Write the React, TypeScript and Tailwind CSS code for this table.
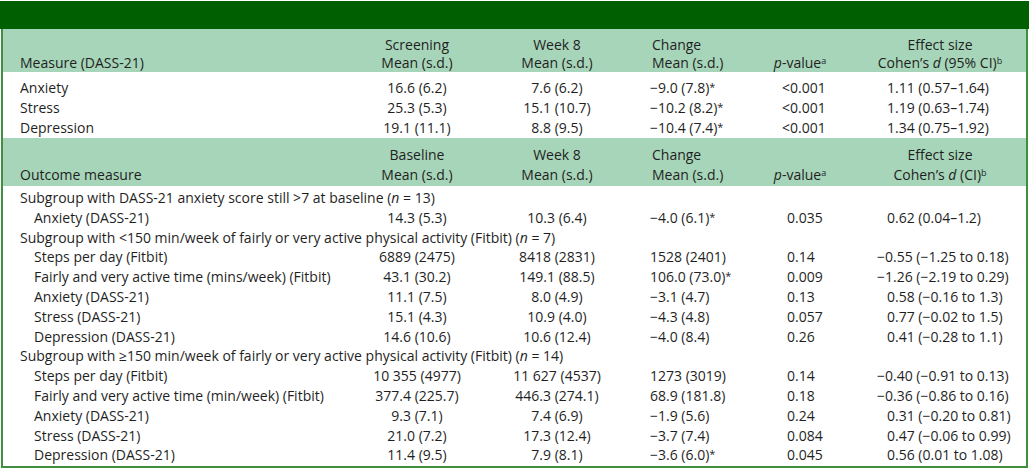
import React from "react";

const GRID = "grid grid-cols-[354px_120px_160px_96px_134px_146px_1fr]";

type Row = {
  label: string;
  v: [string, string, string, string, string];
};

const t1: Row[] = [
  { label: "Anxiety", v: ["16.6 (6.2)", "7.6 (6.2)", "\u22129.0 (7.8)*", "<0.001", "1.11 (0.57\u20131.64)"] },
  { label: "Stress", v: ["25.3 (5.3)", "15.1 (10.7)", "\u221210.2 (8.2)*", "<0.001", "1.19 (0.63\u20131.74)"] },
  { label: "Depression", v: ["19.1 (11.1)", "8.8 (9.5)", "\u221210.4 (7.4)*", "<0.001", "1.34 (0.75\u20131.92)"] },
];

type Item = { kind: "group"; text: React.ReactNode } | { kind: "row"; row: Row };

const n = (k: string) => (
  <>
    (<span className="italic">n</span> = {k})
  </>
);

const t2: Item[] = [
  { kind: "group", text: <>Subgroup with DASS-21 anxiety score still &gt;7 at baseline {n("13")}</> },
  { kind: "row", row: { label: "Anxiety (DASS-21)", v: ["14.3 (5.3)", "10.3 (6.4)", "\u22124.0 (6.1)*", "0.035", "0.62 (0.04\u20131.2)"] } },
  { kind: "group", text: <>Subgroup with &lt;150 min/week of fairly or very active physical activity (Fitbit) {n("7")}</> },
  { kind: "row", row: { label: "Steps per day (Fitbit)", v: ["6889 (2475)", "8418 (2831)", "1528 (2401)", "0.14", "\u22120.55 (\u22121.25 to 0.18)"] } },
  { kind: "row", row: { label: "Fairly and very active time (mins/week) (Fitbit)", v: ["43.1 (30.2)", "149.1 (88.5)", "106.0 (73.0)*", "0.009", "\u22121.26 (\u22122.19 to 0.29)"] } },
  { kind: "row", row: { label: "Anxiety (DASS-21)", v: ["11.1 (7.5)", "8.0 (4.9)", "\u22123.1 (4.7)", "0.13", "0.58 (\u22120.16 to 1.3)"] } },
  { kind: "row", row: { label: "Stress (DASS-21)", v: ["15.1 (4.3)", "10.9 (4.0)", "\u22124.3 (4.8)", "0.057", "0.77 (\u22120.02 to 1.5)"] } },
  { kind: "row", row: { label: "Depression (DASS-21)", v: ["14.6 (10.6)", "10.6 (12.4)", "\u22124.0 (8.4)", "0.26", "0.41 (\u22120.28 to 1.1)"] } },
  { kind: "group", text: <>Subgroup with &ge;150 min/week of fairly or very active physical activity (Fitbit) {n("14")}</> },
  { kind: "row", row: { label: "Steps per day (Fitbit)", v: ["10 355 (4977)", "11 627 (4537)", "1273 (3019)", "0.14", "\u22120.40 (\u22120.91 to 0.13)"] } },
  { kind: "row", row: { label: "Fairly and very active time (min/week) (Fitbit)", v: ["377.4 (225.7)", "446.3 (274.1)", "68.9 (181.8)", "0.18", "\u22120.36 (\u22120.86 to 0.16)"] } },
  { kind: "row", row: { label: "Anxiety (DASS-21)", v: ["9.3 (7.1)", "7.4 (6.9)", "\u22121.9 (5.6)", "0.24", "0.31 (\u22120.20 to 0.81)"] } },
  { kind: "row", row: { label: "Stress (DASS-21)", v: ["21.0 (7.2)", "17.3 (12.4)", "\u22123.7 (7.4)", "0.084", "0.47 (\u22120.06 to 0.99)"] } },
  { kind: "row", row: { label: "Depression (DASS-21)", v: ["11.4 (9.5)", "7.9 (8.1)", "\u22123.6 (6.0)*", "0.045", "0.56 (0.01 to 1.08)"] } },
];

function Val({ s }: { s: string }) {
  if (s.endsWith("*")) {
    return (
      <>
        {s.slice(0, -1)}
        <span className="text-[11px] relative -top-[2px]">*</span>
      </>
    );
  }
  return <>{s}</>;
}

function DataRow({ row, indent, h }: { row: Row; indent?: boolean; h: string }) {
  const [a, b, c, p, e] = row.v;
  const neg = e.startsWith("\u2212");
  return (
    <div className={`${GRID} ${h}`}>
      <div className={indent ? "pl-[31px] whitespace-nowrap" : "pl-[17px] whitespace-nowrap"}>{row.label}</div>
      <div className="text-center whitespace-nowrap">{a}</div>
      <div className="text-center whitespace-nowrap">{b}</div>
      <div className="pl-[13px] whitespace-nowrap">
        <Val s={c} />
      </div>
      <div className={p.startsWith("<") ? "pl-[49px] whitespace-nowrap" : "pl-[54px] whitespace-nowrap"}>{p}</div>
      <div className={neg ? "pl-[10px] whitespace-nowrap" : "pl-[20px] whitespace-nowrap"}>{e}</div>
      <div />
    </div>
  );
}

function Header({ first, c1, c6, lh }: { first: string; c1: string; c6: React.ReactNode; lh: string }) {
  return (
    <div className={`${GRID} ${lh}`}>
      <div className="pl-[17px] flex items-end">{first}</div>
      <div className="flex flex-col items-center">
        <span>{c1}</span>
        <span>Mean (s.d.)</span>
      </div>
      <div className="flex flex-col items-center">
        <span>Week 8</span>
        <span>Mean (s.d.)</span>
      </div>
      <div className="flex flex-col pl-[15px]">
        <span>Change</span>
        <span>Mean (s.d.)</span>
      </div>
      <div className="flex items-end justify-center">
        <span>
          <span className="italic">p</span>-value<sup className="text-[9px]">a</sup>
        </span>
      </div>
      <div className="flex flex-col items-center whitespace-nowrap">
        <span>Effect size</span>
        <span>{c6}</span>
      </div>
      <div />
    </div>
  );
}

export default function App() {
  return (
    <div className="w-[1029px] h-[476px] bg-white pt-px font-['Open_Sans',sans-serif] text-[14px] text-[#1f1f1f]">
      <div className="h-[28px] bg-[#005f00]" />
      <div className="ml-px w-[1027px] border-x-2 border-b-2 border-[#3f8f3f]">
        <div className="pt-[7px] bg-[#a7d5b9]">
          <Header
            lh="leading-[18px]"
            first="Measure (DASS-21)"
            c1="Screening"
            c6={
              <>
                Cohen&rsquo;s <span className="italic">d</span> (95% CI)<sup className="text-[9px]">b</sup>
              </>
            }
          />
        </div>
        <div className="pt-[6px] leading-[20px]">
          {t1.map((r) => (
            <DataRow key={r.label} row={r} h="h-[20px]" />
          ))}
        </div>
        <div className="pt-[7px] pb-px bg-[#a7d5b9]">
          <Header
            lh="leading-[20px]"
            first="Outcome measure"
            c1="Baseline"
            c6={
              <>
                Cohen&rsquo;s <span className="italic">d</span> (CI)<sup className="text-[9px]">b</sup>
              </>
            }
          />
        </div>
        <div className="pt-[2px] pb-px leading-[19.8px]">
          {t2.map((it, i) =>
            it.kind === "group" ? (
              <div key={i} className="h-[19.8px] pl-[17px] whitespace-nowrap">
                {it.text}
              </div>
            ) : (
              <DataRow key={i} row={it.row} indent h="h-[19.8px]" />
            )
          )}
        </div>
      </div>
    </div>
  );
}
